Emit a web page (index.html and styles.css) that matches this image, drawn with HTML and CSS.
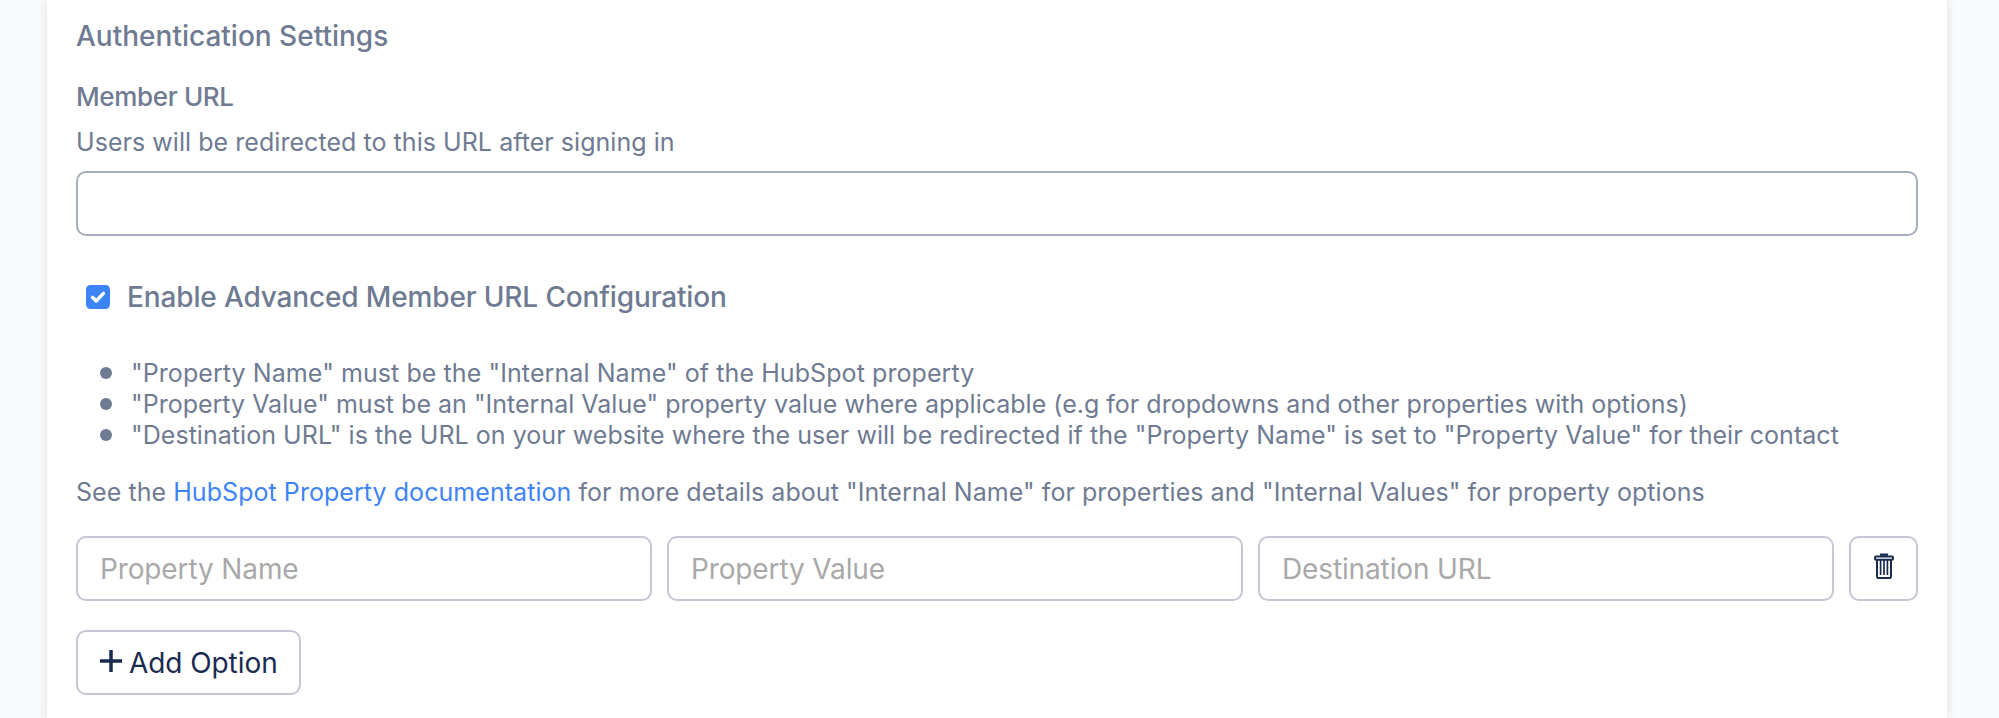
FILE: index.html
```html
<!DOCTYPE html>
<html lang="en">
<head>
<meta charset="utf-8">
<title>Authentication Settings</title>
<link rel="stylesheet" href="styles.css">
</head>
<body>
<main class="card">
  <h2 class="title">Authentication Settings</h2>
  <label class="label" for="member-url">Member URL</label>
  <p class="help">Users will be redirected to this URL after signing in</p>
  <input class="input input-main" id="member-url" type="text">
  <label class="check">
    <svg class="box" viewBox="0 0 24 24"><rect width="24" height="24" rx="4.500" fill="#3f83f8"/><path d="M6.500 12.300l3.700 3.700L17.400 8.300" fill="none" stroke="#fff" stroke-width="3.400" stroke-linecap="round" stroke-linejoin="round"/></svg>
    <span>Enable Advanced Member URL Configuration</span>
  </label>
  <ul class="notes">
    <li class="note note-name">"Property Name" must be the "Internal Name" of the HubSpot property</li>
    <li class="note note-value">"Property Value" must be an "Internal Value" property value where applicable (e.g for dropdowns and other properties with options)</li>
    <li class="note">"Destination URL" is the URL on your website where the user will be redirected if the "Property Name" is set to "Property Value" for their contact</li>
  </ul>
  <p class="see">See the <a class="link" href="#">HubSpot Property documentation</a> for more details about "Internal Name" for properties and "Internal Values" for property options</p>
  <div class="row">
    <input class="input" type="text" placeholder="Property Name">
    <input class="input" type="text" placeholder="Property Value">
    <input class="input" type="text" placeholder="Destination URL">
    <button class="btn btn-icon" type="button" aria-label="Remove">
      <svg class="trash" viewBox="0 0 20 26" fill="none" stroke="#1a2b50" stroke-width="2"><path d="M6 1.700h8" stroke-width="2.400"/><rect x="1" y="3.500" width="18" height="3.300" rx="1"/><path d="M3 7v16.500q0 1.500 1.500 1.500h11q1.500 0 1.500-1.500V7"/><path d="M6.600 7v15M10 7v15M13.400 7v15" stroke-width="1.700"/></svg>
    </button>
  </div>
  <button class="btn btn-add" type="button">
    <svg class="plus" viewBox="0 0 22 22"><path d="M11 0v22M0 11h22" stroke="#1a2b50" stroke-width="3.500"/></svg>
    <span>Add Option</span>
  </button>
</main>
</body>
</html>
```
FILE: styles.css
```css
* { box-sizing: border-box; }
body {
  margin: 0;
  height: 718px;
  overflow: hidden;
  background: #f9fafc;
  color: #6f7b92;
  font-family: Inter, "Liberation Sans", sans-serif;
}
.card {
  width: 1900px;
  height: 718px;
  margin-left: 47px;
  padding: 16px 29px 0;
  background: #fff;
  box-shadow: 0 0 10px rgba(0, 0, 0, 0.1);
}
.title, .label, .help, .see, .notes { margin: 0; white-space: nowrap; }
.title { height: 40px; line-height: 40px; font-size: 28px; font-weight: 500; }
.label { display: block; height: 36px; margin-top: 23px; line-height: 36px; font-size: 26px; font-weight: 500; letter-spacing: -0.36px; }
.help { height: 36px; margin-top: 9px; line-height: 36px; font-size: 25px; letter-spacing: 0.05px; }
.input {
  min-width: 0;
  height: 65px;
  padding: 0 22px;
  border: 2px solid #c3c8d4;
  border-radius: 10px;
  background: #fff;
  font: 28px Inter, "Liberation Sans", sans-serif;
  letter-spacing: -0.13px;
}
.input::placeholder { color: #a9a9a9; opacity: 1; }
.input-main { display: block; width: 1842px; margin-top: 11px; border-color: #a5adbf; }
.check {
  display: flex;
  align-items: center;
  gap: 17px;
  height: 40px;
  margin: 41px 0 0 10px;
  font-size: 28px;
  font-weight: 500;
  letter-spacing: -0.14px;
  white-space: nowrap;
}
.box { width: 24px; height: 24px; }
.notes { height: 93px; margin-top: 41px; padding: 0; list-style: none; font-size: 25px; line-height: 30.8px; letter-spacing: 0.045px; }
.note { display: flex; align-items: center; gap: 19px; height: 30.8px; padding-left: 24px; }
.note::before { content: ""; width: 12px; height: 12px; border-radius: 50%; background: #6f7b92; }
.note-name { letter-spacing: 0.08px; }
.note-value { letter-spacing: 0.01px; }
.see { height: 36px; margin-top: 23px; line-height: 36px; font-size: 25px; letter-spacing: 0.053px; }
.link { color: #3f83f8; text-decoration: none; }
.row { display: grid; grid-template-columns: repeat(3, 1fr) 69px; gap: 15px; margin-top: 26px; }
.btn {
  display: flex;
  align-items: center;
  height: 65px;
  border: 2px solid #c3c8d4;
  border-radius: 10px;
  background: #fff;
  color: #1a2b50;
  font: 28px Inter, "Liberation Sans", sans-serif;
}
.btn-icon { justify-content: center; padding: 0 0 5px; }
.trash { width: 20px; height: 26px; }
.btn-add { gap: 7px; width: 225px; margin-top: 29px; padding: 0 0 0 22px; letter-spacing: -0.07px; white-space: nowrap; }
.plus { width: 22px; height: 22px; margin-top: -4px; }
```
